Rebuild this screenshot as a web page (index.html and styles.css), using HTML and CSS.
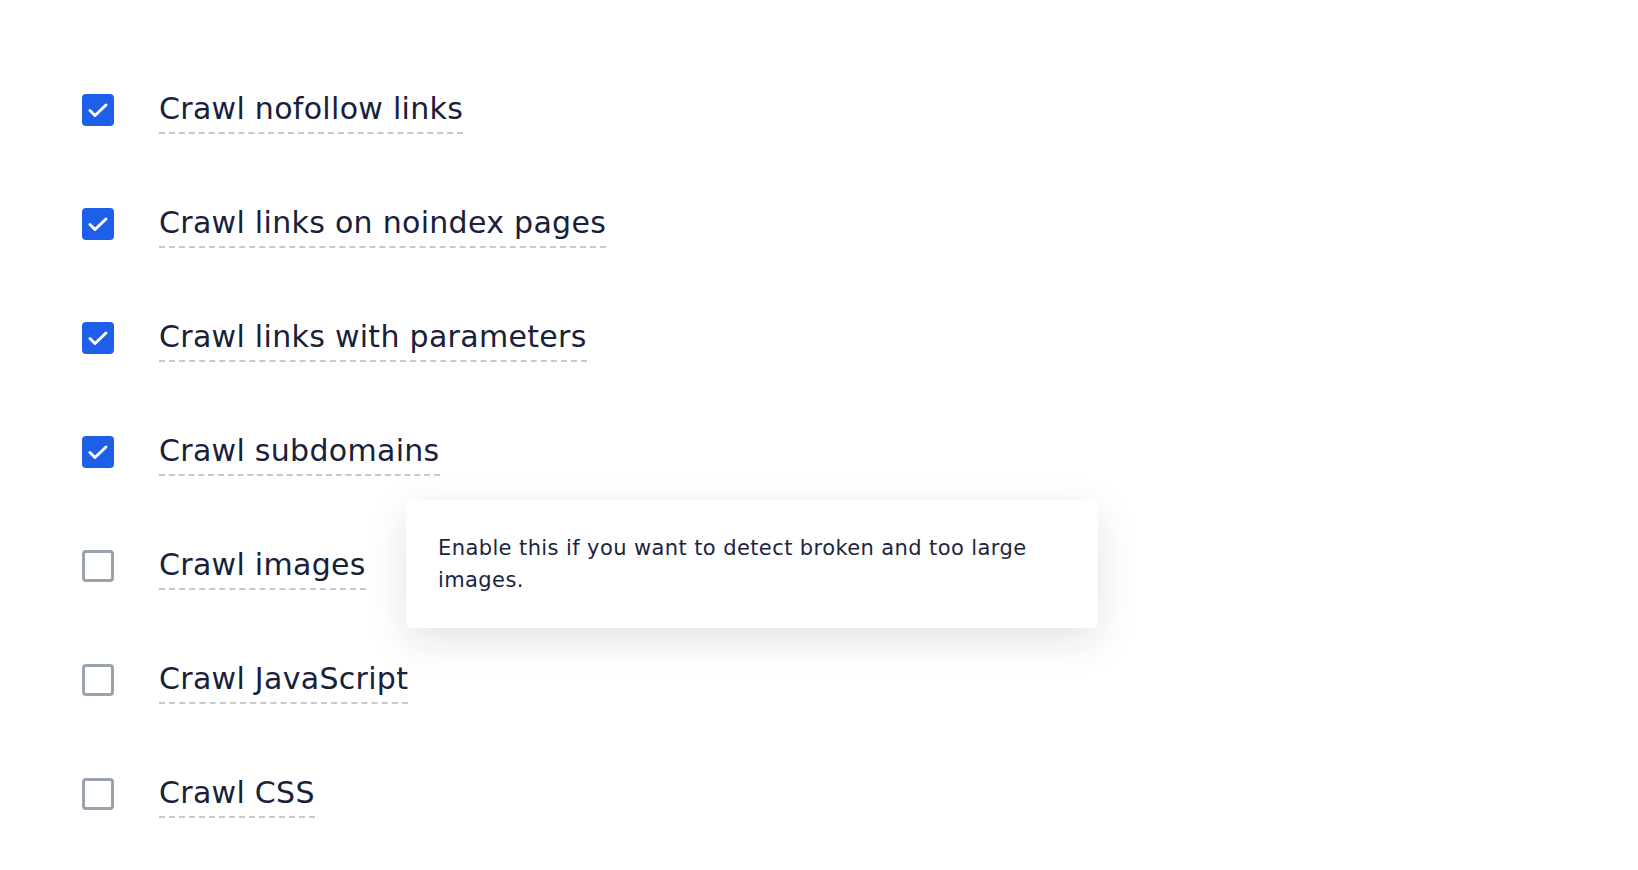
FILE: index.html
```html
<!DOCTYPE html>
<html>
<head>
	<title>crawl settings</title>

	<link rel="stylesheet" href="styles.css">

</head>
<body>

	<ul class="options">
		<li class="option">
			<span class="box checked"><svg viewBox="0 0 32 32"><path d="M8 16.5l5 5L24 11"/></svg></span>
			<span class="label">Crawl nofollow links</span>
		</li>
		<li class="option">
			<span class="box checked"><svg viewBox="0 0 32 32"><path d="M8 16.5l5 5L24 11"/></svg></span>
			<span class="label">Crawl links on noindex pages</span>
		</li>
		<li class="option">
			<span class="box checked"><svg viewBox="0 0 32 32"><path d="M8 16.5l5 5L24 11"/></svg></span>
			<span class="label">Crawl links with parameters</span>
		</li>
		<li class="option">
			<span class="box checked"><svg viewBox="0 0 32 32"><path d="M8 16.5l5 5L24 11"/></svg></span>
			<span class="label">Crawl subdomains</span>
		</li>
		<li class="option">
			<span class="box"></span>
			<span class="label">Crawl images</span>
			<div class="tooltip">Enable this if you want to detect broken and too large images.</div>
		</li>
		<li class="option">
			<span class="box"></span>
			<span class="label">Crawl JavaScript</span>
		</li>
		<li class="option">
			<span class="box"></span>
			<span class="label">Crawl CSS</span>
		</li>
	</ul>

</body>
</html>
```

FILE: styles.css
```css
html {
	background: #fff;
}

body {
	margin: 0;
	font-family: "DejaVu Sans", "Noto Sans", sans-serif;
	color: #18213a;
}

.options {
	list-style: none;
	margin: 0;
	padding: 53px 0 0 82px;
}

.option {
	position: relative;
	display: flex;
	align-items: center;
	height: 114px;
}

.box {
	box-sizing: border-box;
	width: 32px;
	height: 32px;
	border: 3px solid #9aa2ad;
	border-radius: 4px;
	margin-right: 45px;
	flex-shrink: 0;
}

.box.checked {
	background: #1e5fe9;
	border: none;
}

.box svg {
	display: block;
	width: 32px;
	height: 32px;
	fill: none;
	stroke: #fff;
	stroke-width: 3;
	stroke-linecap: round;
	stroke-linejoin: round;
}

.label {
	font-size: 30px;
	letter-spacing: 0.3px;
	line-height: 36px;
	padding: 4px 0 5px;
	border-bottom: 2px dashed #c6c9ce;
}

.tooltip {
	position: absolute;
	left: 324px;
	top: -9px;
	width: 692px;
	box-sizing: border-box;
	padding: 32px 32px;
	background: #fff;
	border-radius: 6px;
	box-shadow: 0 12px 40px rgba(20, 25, 40, 0.12);
	font-size: 21px;
	letter-spacing: 0.4px;
	line-height: 32px;
	color: #1c2540;
}
```
